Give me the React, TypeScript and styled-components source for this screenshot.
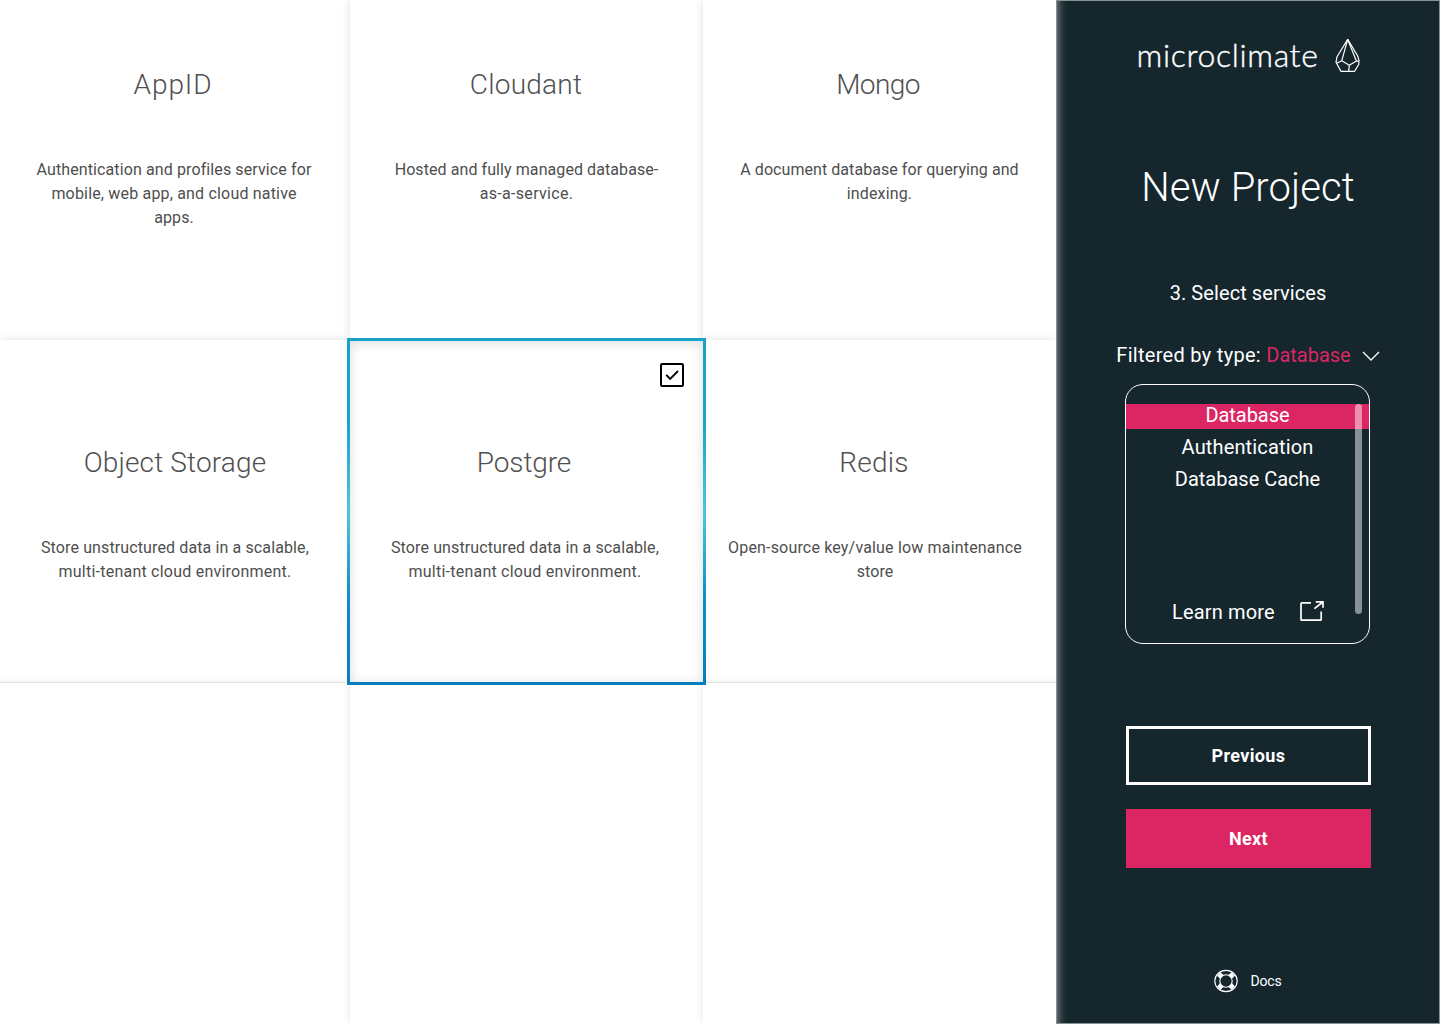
import React from "react";
import styled, { createGlobalStyle, css } from "styled-components";

const PINK = "#dc2663";
const NAVY = "#15262d";

const GlobalStyle = createGlobalStyle`
  * { box-sizing: border-box; }
  body { margin: 0; background: #fff; overflow: hidden; font-family: Roboto, "Liberation Sans", sans-serif; }
  button { font: inherit; cursor: pointer; }
  h1, h2, h3, p { margin: 0; }
  svg { display: block; flex: none; }
`;

const Page = styled.div`
  display: flex;
  width: 1440px;
  height: 1024px;
`;

const ServiceGrid = styled.main`
  display: grid;
  grid-template-columns: 350px 353px 353px;
  grid-template-rows: 340px 343px 341px;
  width: 1056px;
  overflow: hidden;
`;

const Card = styled.section<{ $row: number; $selected?: boolean }>`
  position: relative;
  display: flex;
  flex-direction: column;
  align-items: center;
  padding-top: ${(p) => (p.$row === 0 ? 64 : 102)}px;
  background: #fff;
  color: #505050;
  text-align: center;
  box-shadow: 0 0 9px rgba(0, 0, 0, 0.12);
  ${(p) =>
    p.$row === 2 &&
    css`
      box-shadow: 0 -1px 0 #e2e2e2, 0 0 9px rgba(0, 0, 0, 0.1);
    `}
  ${(p) =>
    p.$selected &&
    css`
      z-index: 2;
      margin: -2px -3px -2px -3px;
      padding-top: 101px;
      border: 3px solid;
      border-image: linear-gradient(#17a3c7 0%, #1ba6c9 25%, #4fc4dc 50%, #0d8fc6 75%, #0580bd 100%) 1;
      box-shadow: inset 0 2px 12px rgba(0, 0, 0, 0.14);
    `}
`;

const CardTitle = styled.h2<{ $ls: number; $dx: number }>`
  height: 40px;
  font-size: 28px;
  line-height: 41px;
  font-weight: 300;
  letter-spacing: ${(p) => p.$ls}px;
  padding-right: ${(p) => p.$dx}px;
  white-space: nowrap;
`;

const CardText = styled.p<{ $dx: number }>`
  display: flex;
  flex-direction: column;
  align-items: center;
  margin-top: 54px;
  padding-right: ${(p) => p.$dx}px;
  font-size: 16px;
  line-height: 24px;
  color: #4e4e4e;
  white-space: nowrap;
`;

const Line = styled.span<{ $ls: number }>`
  letter-spacing: ${(p) => p.$ls}px;
`;

const CheckBox = styled.span`
  position: absolute;
  top: 22px;
  right: 19px;
`;

const Sidebar = styled.aside`
  display: flex;
  flex-direction: column;
  align-items: center;
  width: 384px;
  height: 1024px;
  border: 1px solid #8a8f8f;
  background: linear-gradient(90deg, #5b666b 0, #3c494f 3px, #25333b 6px, ${NAVY} 10px) ${NAVY};
  color: #fff;
`;

const Brand = styled.div`
  display: flex;
  align-items: center;
  gap: 15px;
  height: 40px;
  margin-top: 35px;
`;

const BrandName = styled.span`
  margin-bottom: 3px;
  font-family: Lato, sans-serif;
  font-size: 32px;
  line-height: 40px;
  font-weight: 300;
  letter-spacing: 0.65px;
  -webkit-text-stroke: 0.4px #fff;
`;

const PageTitle = styled.h1`
  margin-top: 82px;
  font-size: 40px;
  line-height: 60px;
  font-weight: 300;
  letter-spacing: 0.1px;
`;

const Step = styled.h3`
  margin-top: 61px;
  font-size: 20px;
  line-height: 28px;
  font-weight: 400;
  letter-spacing: 0.08px;
`;

const Filter = styled.div`
  display: flex;
  align-items: center;
  height: 28px;
  margin-top: 34px;
  font-size: 20px;
  line-height: 28px;
  letter-spacing: 0.3px;
  white-space: pre;
  svg { margin: 2px 0 0 11px; }
`;

const Accent = styled.span`
  color: ${PINK};
  letter-spacing: 0;
`;

const FilterPanel = styled.div`
  position: relative;
  display: flex;
  flex-direction: column;
  width: 245px;
  height: 260px;
  margin-top: 15px;
  margin-right: 1px;
  padding-top: 19px;
  border: 1px solid #fff;
  border-radius: 18px;
`;

const Option = styled.div<{ $active?: boolean; $ls: number }>`
  height: 25px;
  margin-bottom: 7px;
  background: ${(p) => (p.$active ? PINK : "transparent")};
  font-size: 20px;
  line-height: 23px;
  letter-spacing: ${(p) => p.$ls}px;
  text-align: center;
`;

const ScrollThumb = styled.span`
  position: absolute;
  top: 19px;
  right: 7px;
  width: 7px;
  height: 210px;
  border-radius: 4px;
  background: rgba(255, 255, 255, 0.49);
`;

const LearnMore = styled.div`
  display: flex;
  align-items: center;
  gap: 24px;
  height: 28px;
  margin-top: auto;
  margin-bottom: 17px;
  padding-left: 46px;
  font-size: 20px;
  letter-spacing: 0.15px;
`;

const Button = styled.button<{ $primary?: boolean }>`
  width: 245px;
  height: 59px;
  margin-top: ${(p) => (p.$primary ? 24 : 82)}px;
  margin-left: 1px;
  border: ${(p) => (p.$primary ? "0" : "3px solid #fff")};
  background: ${(p) => (p.$primary ? PINK : "transparent")};
  color: #fff;
  font-size: 18px;
  font-weight: 700;
  letter-spacing: 0.35px;
`;

const Docs = styled.div`
  display: flex;
  align-items: center;
  gap: 13px;
  height: 24px;
  margin-top: 101px;
  margin-right: 1px;
  font-size: 14px;
  letter-spacing: -0.2px;
`;

type Service = { title: string; ls: number; dx: number; tdx: number; lines: [string, number][]; selected?: boolean };

const services: Service[] = [
  {
    title: "AppID", ls: 0.9, dx: 4, tdx: 2,
    lines: [["Authentication and profiles service for", 0.11], ["mobile, web app, and cloud native", 0.18], ["apps.", 0.1]],
  },
  { title: "Cloudant", ls: 0.25, dx: 1, tdx: 0, lines: [["Hosted and fully managed database-", 0.08], ["as-a-service.", 0.3]] },
  { title: "Mongo", ls: -0.6, dx: 3, tdx: 0, lines: [["A document database for querying and", 0.06], ["indexing.", 0.15]] },
  { title: "Object Storage", ls: 0.15, dx: 0, tdx: 0, lines: [["Store unstructured data in a scalable,", 0.12], ["multi-tenant cloud environment.", 0.23]] },
  { title: "Postgre", ls: -0.1, dx: 5, tdx: 3, selected: true, lines: [["Store unstructured data in a scalable,", 0.12], ["multi-tenant cloud environment.", 0.23]] },
  { title: "Redis", ls: 0.2, dx: 11, tdx: 9, lines: [["Open-source key/value low maintenance", 0.17], ["store", 0.1]] },
];

const CheckIcon = () => (
  <svg width="24" height="24" viewBox="0 0 24 24" fill="none" stroke="#000">
    <rect x="1" y="1" width="22" height="22" rx="1" strokeWidth="2" />
    <path d="M6.2 11.8 10.2 16 18 8" strokeWidth="1.9" />
  </svg>
);

const DropIcon = () => (
  <svg width="26" height="36" viewBox="0 0 26 36" fill="none" stroke="#fff" strokeWidth="1.2" strokeLinejoin="round">
    <path d="M13.7 1.4 3 18.7 2 24.3 7 33.4H20.5L24.7 26.5 25 22.5 23.7 18Z" />
    <path d="M13.7 1.4 7.7 22.8 15.3 27.2 22.4 22.9 13.7 1.4M2.2 25.5 7.7 22.8M22.4 22.9 25 23.5M15.3 27.2 14.7 33.4" />
  </svg>
);

const ChevronIcon = () => (
  <svg width="18" height="10" viewBox="0 0 18 10" fill="none" stroke="#fff" strokeWidth="1.3">
    <path d="M1 1 9 9 17 1" />
  </svg>
);

const LaunchIcon = () => (
  <svg width="26" height="22" viewBox="0 0 26 22" fill="none" stroke="#fff" strokeWidth="1.7">
    <path d="M12 1.8H2.8Q2 1.8 2 2.6V18.4Q2 19.2 2.8 19.2H21.4Q22.2 19.2 22.2 18.4V10.5" />
    <path d="M16.8 0.9H24V6.8M23.8 1 15.4 7.6" />
  </svg>
);

const LifebuoyIcon = () => (
  <svg width="24" height="24" viewBox="0 0 24 24" fill="none" stroke="#fff">
    <ellipse cx="12" cy="12" rx="11.2" ry="10.6" strokeWidth="1.1" />
    <circle cx="12" cy="12" r="6.2" strokeWidth="1.1" />
    <path d="M4.8 5 7.8 7.8M19.2 5 16.2 7.8M4.8 19 7.8 16.2M19.2 19 16.2 16.2" strokeWidth="5" />
  </svg>
);

export default function App() {
  return (
    <>
      <GlobalStyle />
      <Page>
        <ServiceGrid>
          {services.map((s, i) => (
            <Card key={s.title} $row={Math.floor(i / 3)} $selected={s.selected}>
              {s.selected && <CheckBox><CheckIcon /></CheckBox>}
              <CardTitle $ls={s.ls} $dx={s.dx}>{s.title}</CardTitle>
              <CardText $dx={s.tdx}>
                {s.lines.map(([text, ls]) => <Line key={text} $ls={ls}>{text}</Line>)}
              </CardText>
            </Card>
          ))}
          <Card $row={2} />
          <Card $row={2} />
          <Card $row={2} />
        </ServiceGrid>
        <Sidebar>
          <Brand>
            <BrandName>microclimate</BrandName>
            <DropIcon />
          </Brand>
          <PageTitle>New Project</PageTitle>
          <Step>3. Select services</Step>
          <Filter>
            Filtered by type: <Accent>Database</Accent>
            <ChevronIcon />
          </Filter>
          <FilterPanel>
            <Option $active $ls={-0.05}>Database</Option>
            <Option $ls={0.15}>Authentication</Option>
            <Option $ls={0}>Database Cache</Option>
            <LearnMore>Learn more<LaunchIcon /></LearnMore>
            <ScrollThumb />
          </FilterPanel>
          <Button>Previous</Button>
          <Button $primary>Next</Button>
          <Docs><LifebuoyIcon />Docs</Docs>
        </Sidebar>
      </Page>
    </>
  );
}
